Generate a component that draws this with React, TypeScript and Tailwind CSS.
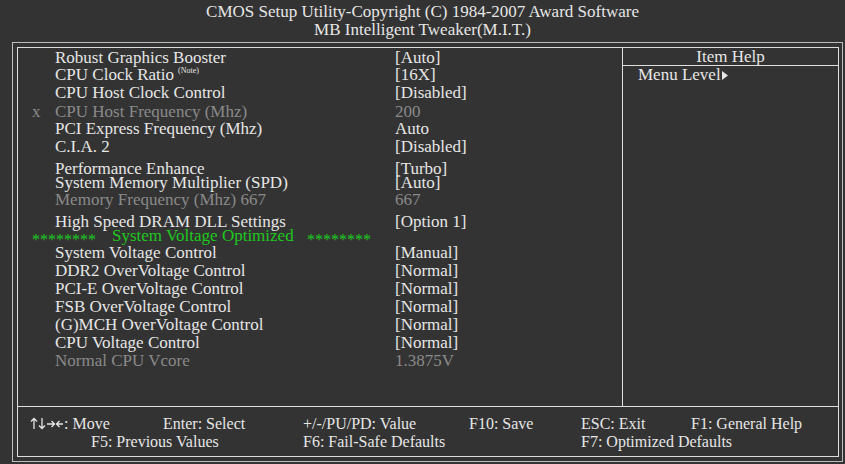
import { Fragment } from "react";

type Row = {
  label?: string;
  value?: string;
  off?: boolean;
  x?: boolean;
  note?: boolean;
  green?: boolean;
  mt: string;
};

const ROWS: Row[] = [
  { label: "Robust Graphics Booster", value: "[Auto]", mt: "mt-[1px]" },
  { label: "CPU Clock Ratio", note: true, value: "[16X]", mt: "-mt-px" },
  { label: "CPU Host Clock Control", value: "[Disabled]", mt: "mt-0" },
  { label: "CPU Host Frequency (Mhz)", value: "200", off: true, x: true, mt: "mt-px" },
  { label: "PCI Express Frequency (Mhz)", value: "Auto", mt: "-mt-px" },
  { label: "C.I.A. 2", value: "[Disabled]", mt: "mt-0" },
  { label: "Performance Enhance", value: "[Turbo]", mt: "mt-[4px]" },
  { label: "System Memory Multiplier (SPD)", value: "[Auto]", mt: "-mt-[4px]" },
  { label: "Memory Frequency (Mhz) 667", value: "667", off: true, mt: "-mt-px" },
  { label: "High Speed DRAM DLL Settings", value: "[Option 1]", mt: "mt-[4px]" },
  { green: true, mt: "-mt-[4px]" },
  { label: "System Voltage Control", value: "[Manual]", mt: "-mt-px" },
  { label: "DDR2 OverVoltage Control", value: "[Normal]", mt: "mt-0" },
  { label: "PCI-E OverVoltage Control", value: "[Normal]", mt: "mt-0" },
  { label: "FSB OverVoltage Control", value: "[Normal]", mt: "mt-0" },
  { label: "(G)MCH OverVoltage Control", value: "[Normal]", mt: "mt-0" },
  { label: "CPU Voltage Control", value: "[Normal]", mt: "mt-0" },
  { label: "Normal CPU Vcore", value: "1.3875V", off: true, mt: "mt-0" },
];

function SettingRow({ row }: { row: Row }) {
  if (row.green) {
    return (
      <div className={`flex h-[18px] leading-[18px] pl-[14px] text-[#1ec81e] ${row.mt}`}>
        <span className="w-[80px] text-[16px] relative top-[4px]">********</span>
        <span className="w-[195px]">System Voltage Optimized</span>
        <span className="text-[16px] relative top-[4px]">********</span>
      </div>
    );
  }
  const tone = row.off ? "text-[#8a8a8a]" : "text-[#e6e6e6]";
  return (
    <div className={`flex h-[18px] leading-[18px] whitespace-nowrap ${tone} ${row.mt}`}>
      <span className="w-[37px] pl-[14px]">{row.x ? "x" : ""}</span>
      <span className="w-[340px]">
        {row.label}
        {row.note && <span className="ml-[4px] text-[8px] leading-none relative -top-[7px]">(Note)</span>}
      </span>
      <span>{row.value}</span>
    </div>
  );
}

// arrow keys glyph group drawn as strokes
function Arrows() {
  return (
    <svg width="34" height="13" viewBox="0 0 34 13" fill="none" stroke="#e6e6e6" strokeWidth="1.3" className="inline-block align-[-1px]">
      <path d="M4 12V1.5M1 4.5L4 1.5L7 4.5" />
      <path d="M12 1V11.5M9 8.5L12 11.5L15 8.5" />
      <path d="M17 7H24.5M21.5 4L24.5 7L21.5 10" />
      <path d="M33 7H26.5M29.5 4L26.5 7L29.5 10" />
    </svg>
  );
}

const FOOT1 = [
  { text: ": Move", w: "w-[133px]", arrows: true },
  { text: "Enter: Select", w: "w-[140px]" },
  { text: "+/-/PU/PD: Value", w: "w-[166px]" },
  { text: "F10: Save", w: "w-[112px]" },
  { text: "ESC: Exit", w: "w-[110px]" },
  { text: "F1: General Help", w: "" },
];

const FOOT2 = [
  { text: "F5: Previous Values", w: "w-[212px]" },
  { text: "F6: Fail-Safe Defaults", w: "w-[278px]" },
  { text: "F7: Optimized Defaults", w: "" },
];

export default function App() {
  return (
    <div className="w-[845px] h-[464px] bg-[#333333] text-[#e6e6e6] font-['Liberation_Serif',serif] overflow-hidden">
      <header className="h-[42px] flex flex-col items-center pt-[3px] text-[17px] leading-[18px]">
        <div>CMOS Setup Utility-Copyright (C) 1984-2007 Award Software</div>
        <div>MB Intelligent Tweaker(M.I.T.)</div>
      </header>

      <div className="ml-[12px] w-[831px] h-[420px] border border-[#bdbdbd] pt-[4px] pl-[4px] pr-[3px] pb-[4px]">
        <div className="h-full border border-[#dedede] flex flex-col">
          <div className="h-[359px] border-b border-[#dedede] flex">
            <div className="w-[605px] border-r border-[#dedede] text-[17px]">
              {ROWS.map((row, i) => (
                <SettingRow key={i} row={row} />
              ))}
            </div>
            <div className="flex-1 text-[17px]">
              <div className="h-[18px] border-b border-[#dedede] text-center leading-[18px]">Item Help</div>
              <div className="pl-[15px] h-[18px] leading-[18px] flex items-center">
                Menu Level
                <svg width="6" height="9" viewBox="0 0 6 9" className="ml-[1px]">
                  <polygon points="0,0 6,4.5 0,9" fill="#e6e6e6" />
                </svg>
              </div>
            </div>
          </div>

          <div className="flex-1 pt-[8px] text-[16px] leading-[18px]">
            <div className="flex pl-[12px] whitespace-nowrap">
              {FOOT1.map((f) => (
                <span key={f.text} className={f.w}>
                  {f.arrows && <Arrows />}
                  {f.text}
                </span>
              ))}
            </div>
            <div className="flex pl-[73px] whitespace-nowrap">
              {FOOT2.map((f) => (
                <Fragment key={f.text}>
                  <span className={f.w}>{f.text}</span>
                </Fragment>
              ))}
            </div>
          </div>
        </div>
      </div>
    </div>
  );
}
